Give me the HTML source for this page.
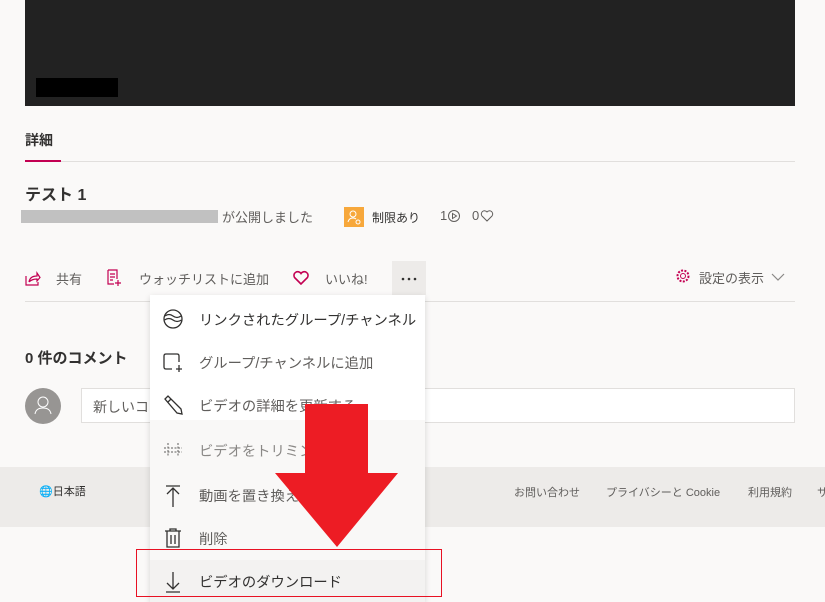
<!DOCTYPE html>
<html><head><meta charset="utf-8"><style>
*{margin:0;padding:0;box-sizing:border-box}
body{width:825px;height:602px;overflow:hidden;background:#faf9f8;position:relative;font-family:"Liberation Sans","Noto Sans CJK JP",sans-serif;color:#323130}
.a{position:absolute;white-space:nowrap}
.mi{position:absolute;left:150px;width:275px;height:43px}
.mi span{position:absolute;left:49px;top:12px;font-size:14.3px;color:#323130;white-space:nowrap}
.mi svg{position:absolute;left:12px;top:11px}
</style></head><body>
<div class="a" style="left:25px;top:0;width:770px;height:106px;background:#222"></div>
<div class="a" style="left:36px;top:78px;width:82px;height:19px;background:#000"></div>
<div class="a" style="left:25px;top:130px;font-size:14px;font-weight:bold">詳細</div>
<div class="a" style="left:25px;top:160px;width:36px;height:2px;background:#c30052"></div>
<div class="a" style="left:61px;top:161px;width:734px;height:1px;background:#e1dfdd"></div>
<div class="a" style="left:25px;top:181px;font-size:16px;font-weight:bold">テスト 1</div>
<div class="a" style="left:21px;top:210px;width:197px;height:13px;background:#c1c1c1"></div>
<div class="a" style="left:222px;top:207px;font-size:13px;color:#605e5c">が公開しました</div>
<div class="a" style="left:344px;top:207px;width:20px;height:20px;background:#f7a83b"></div>
<svg class="a" style="left:344px;top:207px" width="20" height="20"><circle cx="9" cy="7" r="3" fill="none" stroke="#fff"/><path d="M4 15 Q5 11 9 11 Q11 11 12 12" fill="none" stroke="#fff"/><circle cx="14" cy="15" r="2" fill="none" stroke="#fff"/></svg>
<div class="a" style="left:372px;top:209px;font-size:12px;color:#323130">制限あり</div>
<div class="a" style="left:440px;top:208px;font-size:13px;color:#605e5c">1</div>
<svg class="a" style="left:447px;top:209px" width="14" height="14"><circle cx="7" cy="7" r="5.5" fill="none" stroke="#605e5c"/><path d="M5.5 4.5 L9.5 7 L5.5 9.5Z" fill="none" stroke="#605e5c"/></svg>
<div class="a" style="left:472px;top:208px;font-size:13px;color:#605e5c">0</div>
<svg class="a" style="left:480px;top:209px" width="14" height="14"><path d="M7 12 L2 7 A3 3 0 0 1 7 3 A3 3 0 0 1 12 7Z" fill="none" stroke="#605e5c"/></svg>
<svg class="a" style="left:25px;top:270px" width="16" height="16"><path d="M1 6 V15 H13 V12 M4 12 Q5 6 12 6 V3 L15 7.5 L12 11 V9 Q7 9 4 12" fill="none" stroke="#c30052" stroke-width="1.2"/></svg>
<div class="a" style="left:56px;top:269px;font-size:13px;color:#605e5c">共有</div>
<svg class="a" style="left:107px;top:269px" width="16" height="18"><path d="M1 1 H10 V10 M1 1 V15 H7 M3 5 H8 M3 8 H8 M3 11 H6 M11 11 V17 M8 14 H14" fill="none" stroke="#c30052" stroke-width="1.2"/></svg>
<div class="a" style="left:139px;top:269px;font-size:13px;color:#605e5c">ウォッチリストに追加</div>
<svg class="a" style="left:292px;top:270px" width="18" height="16"><path d="M9 14 L2.5 7.5 A3.5 3.5 0 0 1 9 3.5 A3.5 3.5 0 0 1 15.5 7.5Z" fill="none" stroke="#c30052" stroke-width="1.6"/></svg>
<div class="a" style="left:325px;top:269px;font-size:13px;color:#605e5c">いいね!</div>
<div class="a" style="left:392px;top:261px;width:34px;height:34px;background:#edebe9"></div>
<svg class="a" style="left:392px;top:261px" width="34" height="34"><circle cx="11" cy="18" r="1.3" fill="#323130"/><circle cx="17" cy="18" r="1.3" fill="#323130"/><circle cx="23" cy="18" r="1.3" fill="#323130"/></svg>
<svg class="a" style="left:675px;top:268px" width="16" height="16"><circle cx="8" cy="8" r="2.5" fill="none" stroke="#c30052"/><circle cx="8" cy="8" r="5.5" fill="none" stroke="#c30052" stroke-width="2" stroke-dasharray="2 1.4"/></svg>
<div class="a" style="left:699px;top:268px;font-size:13px;color:#605e5c">設定の表示</div>
<svg class="a" style="left:771px;top:272px" width="14" height="10"><path d="M1 2 L7 8 L13 2" fill="none" stroke="#8a8886" stroke-width="1.2"/></svg>
<div class="a" style="left:25px;top:301px;width:770px;height:1px;background:#e1dfdd"></div>
<div class="a" style="left:25px;top:347px;font-size:15px;font-weight:bold">0 件のコメント</div>
<div class="a" style="left:25px;top:388px;width:36px;height:36px;border-radius:50%;background:#979593"></div>
<svg class="a" style="left:25px;top:388px" width="36" height="36"><circle cx="18" cy="14" r="5" fill="none" stroke="#fff"/><path d="M10 26 Q11 20 18 20 Q25 20 26 26" fill="none" stroke="#fff"/></svg>
<div class="a" style="left:81px;top:388px;width:714px;height:35px;background:#fff;border:1px solid #e1dfdd"></div>
<div class="a" style="left:93px;top:397px;font-size:14px;color:#605e5c">新しいコ</div>
<div class="a" style="left:0;top:467px;width:825px;height:60px;background:#edebe9"></div>
<div class="a" style="left:39px;top:483px;font-size:11px;color:#323130">🌐日本語</div>
<div class="a" style="left:514px;top:484px;font-size:11px;color:#605e5c">お問い合わせ</div>
<div class="a" style="left:606px;top:484px;font-size:11px;color:#605e5c">プライバシーと Cookie</div>
<div class="a" style="left:748px;top:484px;font-size:11px;color:#605e5c">利用規約</div>
<div class="a" style="left:817px;top:484px;font-size:11px;color:#605e5c">サ</div>
<div class="a" style="left:150px;top:295px;width:275px;height:307px;background:#fff;box-shadow:0 2px 6px rgba(0,0,0,.15)"></div>
<div class="a" style="left:150px;top:420px;width:275px;height:145px;background:#f9f8f7"></div>
<div class="mi" style="top:297px"><svg width="22" height="22"><circle cx="11" cy="11" r="9" fill="none" stroke="#323130" stroke-width="1.3"/><path d="M3 8 Q7 5 11 8 Q15 11 19 8 M2.5 12 Q7 9 11 12 Q15 15 19.5 12" fill="none" stroke="#323130" stroke-width="1.3"/></svg><span>リンクされたグループ/チャンネル</span></div>
<div class="mi" style="top:340px"><svg width="22" height="22"><path d="M10 18 H4 Q2 18 2 16 V5 Q2 3 4 3 H15 Q17 3 17 5 V11 M17 14 V21 M14 18 H20" fill="none" stroke="#323130" stroke-width="1.3"/></svg><span style="color:#605e5c">グループ/チャンネルに追加</span></div>
<div class="mi" style="top:383px"><svg width="22" height="22"><path d="M3 5 L6 2 L19 15 L20 20 L15 19 Z M6 8 L9 5" fill="none" stroke="#323130" stroke-width="1.3"/></svg><span style="color:#605e5c">ビデオの詳細を更新する</span></div>
<div class="mi" style="top:428px"><svg width="22" height="22"><path d="M6 4 V18 M16 4 V18 M2 9 H20 M2 13 H20" fill="none" stroke="#605e5c" stroke-dasharray="2 1.5"/></svg><span style="color:#8a8886">ビデオをトリミン</span></div>
<div class="mi" style="top:473px"><svg width="22" height="24"><path d="M4 2 H18 M11 4 V23 M5 10 L11 4 L17 10" fill="none" stroke="#323130" stroke-width="1.3"/></svg><span style="color:#605e5c">動画を置き換え</span></div>
<div class="mi" style="top:516px"><svg width="22" height="22"><path d="M3 4 H19 M8 4 V2 H14 V4 M5 4 V20 H17 V4 M9 8 V17 M13 8 V17" fill="none" stroke="#323130" stroke-width="1.3"/></svg><span style="color:#605e5c">削除</span></div>
<div class="a" style="left:150px;top:560px;width:275px;height:42px;background:#f3f2f1"></div>
<div class="mi" style="top:559px"><svg width="22" height="24"><path d="M11 2 V19 M5 13 L11 19 L17 13 M4 22 H18" fill="none" stroke="#323130" stroke-width="1.3"/></svg><span>ビデオのダウンロード</span></div>
<svg class="a" style="left:0;top:0" width="825" height="602"><path d="M305 404 H368 V473 H398 L337 547 L275 473 H305 Z" fill="#ed1c24"/><rect x="136.5" y="549.5" width="305" height="47" fill="none" stroke="#e81123" stroke-width="1"/></svg>
</body></html>
